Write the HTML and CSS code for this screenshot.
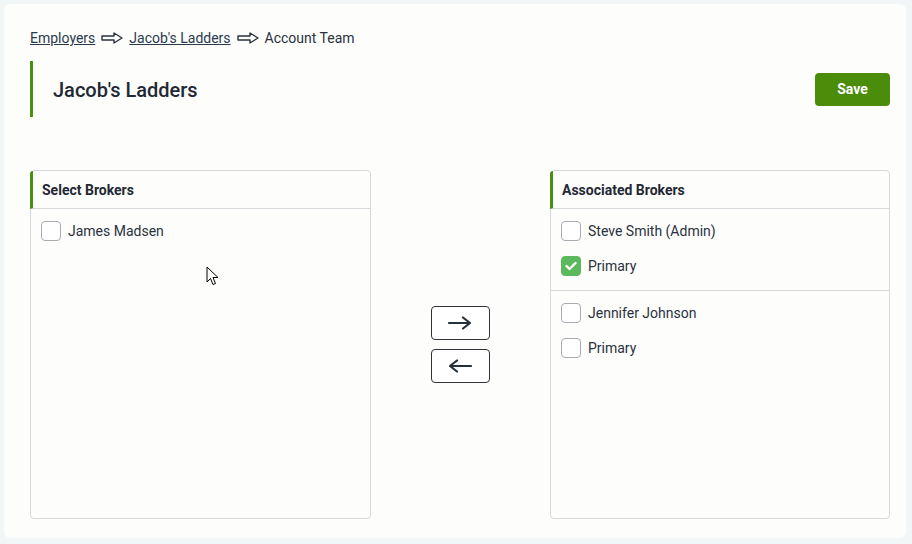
FILE: index.html
```html
<html>
<head>
<title>Account Team</title>
<link rel="stylesheet" href="styles.css">
</head>
<body>
<div class="card">
  <div class="crumbs">
    <a href="#">Employers</a>
    <svg class="crumb-arrow" width="22" height="12" viewBox="0 0 22 12"><polygon points="1,4 13,4 13,1 21,6 13,11 13,8 1,8" /></svg>
    <a href="#">Jacob's Ladders</a>
    <svg class="crumb-arrow" width="22" height="12" viewBox="0 0 22 12"><polygon points="1,4 13,4 13,1 21,6 13,11 13,8 1,8" /></svg>
    <span>Account Team</span>
  </div>

  <div class="title-bar">
    <h1>Jacob's Ladders</h1>
    <button class="save">Save</button>
  </div>

  <div class="lists">
    <div class="panel">
      <div class="panel-head">Select Brokers</div>
      <div class="group">
        <label class="row"><span class="box"></span>James Madsen</label>
      </div>
    </div>

    <div class="movers">
      <button class="move"><svg width="26" height="14" viewBox="0 0 26 14"><path d="M2 7H23M16 1.5L23 7L16 12.5" /></svg></button>
      <button class="move"><svg width="26" height="14" viewBox="0 0 26 14"><path d="M24 7H3M10 1.5L3 7L10 12.5" /></svg></button>
    </div>

    <div class="panel">
      <div class="panel-head">Associated Brokers</div>
      <div class="group">
        <label class="row"><span class="box"></span>Steve Smith (Admin)</label>
        <label class="row"><span class="box checked"><svg width="12" height="10" viewBox="0 0 12 10"><path d="M1.5 5L4.5 8L10.5 2" /></svg></span>Primary</label>
      </div>
      <div class="group">
        <label class="row"><span class="box"></span>Jennifer Johnson</label>
        <label class="row"><span class="box"></span>Primary</label>
      </div>
    </div>
  </div>

  <!-- mouse pointer captured in the screenshot -->
  <svg class="pointer" width="14" height="21" viewBox="0 0 14 21"><path d="M1 1V16L4.5 12.5L7 18.5L9.5 17.5L7 11.5H12Z" /></svg>
</div>
</body>
</html>
```

FILE: styles.css
```css
body {
  margin: 0;
  background: #f2f6f6;
  font-family: Roboto, "Liberation Sans", sans-serif;
  color: #2a323c;
}

.card {
  position: relative;
  margin: 4px 6px 6px 4px;
  height: 534px;
  box-sizing: border-box;
  padding: 24px 16px 19px 26px;
  background: #fdfdfc;
  border-radius: 6px;
  display: flex;
  flex-direction: column;
}

.crumbs {
  display: flex;
  align-items: center;
  gap: 6px;
  font-size: 14px;
  line-height: 20px;
  color: #2a323c;
}
.crumbs a { color: #2a3a4c; text-decoration: underline; }
.crumb-arrow { fill: none; stroke: #2a323c; stroke-width: 1.4; stroke-linejoin: round; }

.title-bar {
  margin-top: 13px;
  height: 56px;
  border-left: 3px solid #4a9111;
  display: flex;
  align-items: center;
  justify-content: space-between;
}
.title-bar h1 {
  margin: 2px 0 0 20px;
  font-size: 20px;
  font-weight: 500;
  color: #1f2833;
}
.save {
  width: 75px;
  height: 33px;
  border: none;
  border-radius: 4px;
  background: #4b8c0b;
  color: #fff;
  font-family: Roboto, "Liberation Sans", sans-serif;
  font-size: 14px;
  font-weight: 700;
}

.lists {
  margin-top: 53px;
  flex: 1;
  display: grid;
  grid-template-columns: 341px 179px 340px;
}

.panel {
  border: 1px solid #d6d9dc;
  border-radius: 4px;
  background: #fdfdfc;
}
.panel-head {
  height: 38px;
  box-sizing: border-box;
  border-left: 3px solid #4a9111;
  border-bottom: 1px solid #d6d9dc;
  padding-left: 9px;
  display: flex;
  align-items: center;
  font-size: 14px;
  font-weight: 700;
  color: #1f2833;
  margin-left: -1px;
  border-top-left-radius: 3px;
}
.group {
  padding: 12px 10px 14px;
  display: flex;
  flex-direction: column;
  gap: 15px;
}
.group + .group { border-top: 1px solid #d6d9dc; padding-top: 12px; }

.row {
  display: flex;
  align-items: center;
  gap: 7px;
  font-size: 14px;
  line-height: 20px;
  color: #2a323c;
}
.box {
  width: 20px;
  height: 20px;
  box-sizing: border-box;
  border: 1px solid #a7abb0;
  border-radius: 4px;
  background: #fff;
  display: flex;
  align-items: center;
  justify-content: center;
}
.box.checked { background: #5cb85c; border-color: #5cb85c; }
.box svg { fill: none; stroke: #fff; stroke-width: 2.4; stroke-linecap: round; stroke-linejoin: round; }

.movers {
  display: flex;
  flex-direction: column;
  align-items: center;
  justify-content: center;
  gap: 9px;
  padding-right: 1px;
}
.move {
  width: 59px;
  height: 34px;
  border: 1px solid #2f3338;
  border-radius: 4px;
  background: #fff;
  display: flex;
  align-items: center;
  justify-content: center;
  padding: 0;
}
.move svg { fill: none; stroke: #26303b; stroke-width: 2.2; stroke-linecap: round; stroke-linejoin: round; }

.pointer {
  position: absolute;
  left: 202px;
  top: 262px;
  fill: #fff;
  stroke: #000;
  stroke-width: 1;
  stroke-linejoin: round;
}
```
